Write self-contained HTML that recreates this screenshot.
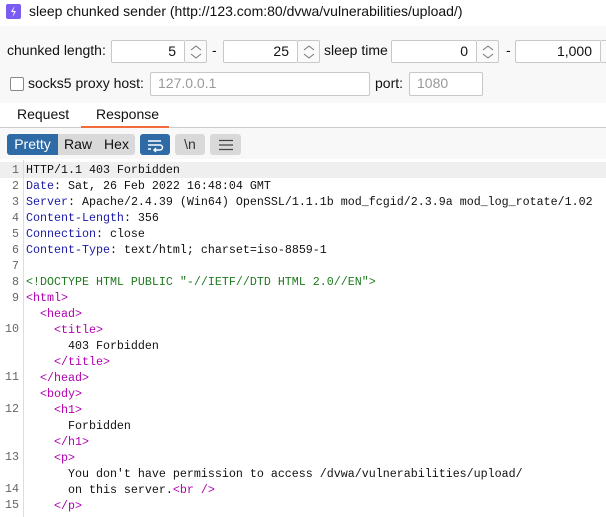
<!DOCTYPE html><html><head><style>
*{margin:0;padding:0;box-sizing:border-box}
body{width:606px;height:517px;overflow:hidden;background:#fff;font-family:"Liberation Sans",sans-serif;position:relative;color:#111}
.a{position:absolute}
.t{font-size:14px;white-space:nowrap}
.in{position:absolute;background:#fff;border:1px solid #c8c8c8;border-radius:2px;font-size:14px;text-align:right;padding-right:8px;line-height:21px}
.sp{position:absolute;border:1px solid #c8c8c8;border-left:none;border-radius:0 2px 2px 0;background:#fafafa}
.sp svg{position:absolute;left:5px;top:3px}
.code{position:absolute;left:0;font-family:"Liberation Mono",monospace;font-size:11.67px;white-space:pre;line-height:16px}
.ln{position:absolute;width:19px;text-align:right;color:#666;font-family:"Liberation Mono",monospace;font-size:11.67px;line-height:16px}
.k{color:#1a1aa6}.g{color:#1f7a1f}.m{color:#b000b0}
.btn{position:absolute;top:134px;height:21px;font-size:14px;line-height:21px;text-align:center;border-radius:3px}
</style></head><body>
<div class="a" style="left:6px;top:4px;width:15px;height:15px;background:#7b5cf2;border-radius:2px"><svg width="15" height="15"><path d="M8.5 2 L5 8 H8 L6.5 13 L10 7 H7 Z" fill="#fff"/></svg></div>
<div class="a t" style="left:29px;top:3px">sleep chunked sender (http://123.com:80/dvwa/vulnerabilities/upload/)</div>
<div class="a" style="left:0;top:26px;width:606px;height:77px;background:#f8f8f8"></div>
<div class="a t" style="left:7px;top:42px">chunked length:</div>
<div class="in" style="left:111px;top:40px;width:74px;height:23px">5</div>
<div class="sp" style="left:185px;top:40px;width:22px;height:23px"><svg width="12" height="16"><path d="M1 6 L6 2 L11 6 M1 10 L6 14 L11 10" stroke="#777" fill="none"/></svg></div>
<div class="a t" style="left:212px;top:42px">-</div>
<div class="in" style="left:223px;top:40px;width:75px;height:23px">25</div>
<div class="sp" style="left:298px;top:40px;width:22px;height:23px"><svg width="12" height="16"><path d="M1 6 L6 2 L11 6 M1 10 L6 14 L11 10" stroke="#777" fill="none"/></svg></div>
<div class="a t" style="left:324px;top:42px">sleep time</div>
<div class="in" style="left:391px;top:40px;width:86px;height:23px">0</div>
<div class="sp" style="left:477px;top:40px;width:22px;height:23px"><svg width="12" height="16"><path d="M1 6 L6 2 L11 6 M1 10 L6 14 L11 10" stroke="#777" fill="none"/></svg></div>
<div class="a t" style="left:506px;top:42px">-</div>
<div class="in" style="left:515px;top:40px;width:86px;height:23px">1,000</div>
<div class="sp" style="left:601px;top:40px;width:22px;height:23px"></div>
<div class="a" style="left:10px;top:77px;width:14px;height:14px;border:1px solid #888;border-radius:2px;background:#fff"></div>
<div class="a t" style="left:28px;top:75px">socks5 proxy host:</div>
<div class="in" style="left:150px;top:72px;width:220px;height:24px;text-align:left;padding-left:7px;color:#999">127.0.0.1</div>
<div class="a t" style="left:375px;top:75px">port:</div>
<div class="in" style="left:409px;top:72px;width:74px;height:24px;text-align:left;padding-left:7px;color:#999">1080</div>
<div class="a t" style="left:17px;top:106px">Request</div>
<div class="a t" style="left:96px;top:106px">Response</div>
<div class="a" style="left:0;top:127px;width:606px;height:1px;background:#ccc"></div>
<div class="a" style="left:81px;top:126px;width:88px;height:2px;background:#f26b3a"></div>
<div class="a" style="left:0;top:128px;width:606px;height:31px;background:#f8f8f8"></div>
<div class="btn" style="left:7px;width:128px;background:#d9d9d9"></div>
<div class="btn" style="left:7px;width:51px;background:#2d6aa6;color:#fff;border-radius:3px 0 0 3px">Pretty</div>
<div class="btn" style="left:58px;width:40px">Raw</div>
<div class="btn" style="left:98px;width:37px">Hex</div>
<div class="btn" style="left:140px;width:30px;background:#2d6aa6"><svg width="20" height="16" style="margin-top:3px"><path d="M3 4 H16 M3 8 H15 A2.5 2.5 0 0 1 15 13 H9 M11 11 L9 13 L11 15 M3 12 H6" stroke="#fff" stroke-width="1.4" fill="none"/></svg></div>
<div class="btn" style="left:175px;width:30px;background:#d9d9d9;color:#333">\n</div>
<div class="btn" style="left:210px;width:31px;background:#d9d9d9"><svg width="18" height="16" style="margin-top:3px"><path d="M2 3.5 H16 M2 8 H16 M2 12.5 H16" stroke="#444" stroke-width="1.3"/></svg></div>
<div class="a" style="left:0;top:162px;width:606px;height:16px;background:#efefef"></div>
<div class="a" style="left:23px;top:160px;width:1px;height:357px;background:#ddd"></div>
<div class="ln" style="top:162px">1<br>2<br>3<br>4<br>5<br>6<br>7<br>8<br>9</div>
<div class="ln" style="top:321px">10</div><div class="ln" style="top:369px">11</div><div class="ln" style="top:401px">12</div><div class="ln" style="top:449px">13</div><div class="ln" style="top:481px">14</div><div class="ln" style="top:497px">15</div>
<div class="code" style="left:26px;top:162px">HTTP/1.1 403 Forbidden
<span class="k">Date</span>: Sat, 26 Feb 2022 16:48:04 GMT
<span class="k">Server</span>: Apache/2.4.39 (Win64) OpenSSL/1.1.1b mod_fcgid/2.3.9a mod_log_rotate/1.02
<span class="k">Content-Length</span>: 356
<span class="k">Connection</span>: close
<span class="k">Content-Type</span>: text/html; charset=iso-8859-1

<span class="g">&lt;!DOCTYPE HTML PUBLIC "-//IETF//DTD HTML 2.0//EN"&gt;</span>
<span class="m">&lt;html&gt;</span>
  <span class="m">&lt;head&gt;</span>
    <span class="m">&lt;title&gt;</span>
      403 Forbidden
    <span class="m">&lt;/title&gt;</span>
  <span class="m">&lt;/head&gt;</span>
  <span class="m">&lt;body&gt;</span>
    <span class="m">&lt;h1&gt;</span>
      Forbidden
    <span class="m">&lt;/h1&gt;</span>
    <span class="m">&lt;p&gt;</span>
      You don't have permission to access /dvwa/vulnerabilities/upload/
      on this server.<span class="m">&lt;br /&gt;</span>
    <span class="m">&lt;/p&gt;</span></div>
</body></html>
